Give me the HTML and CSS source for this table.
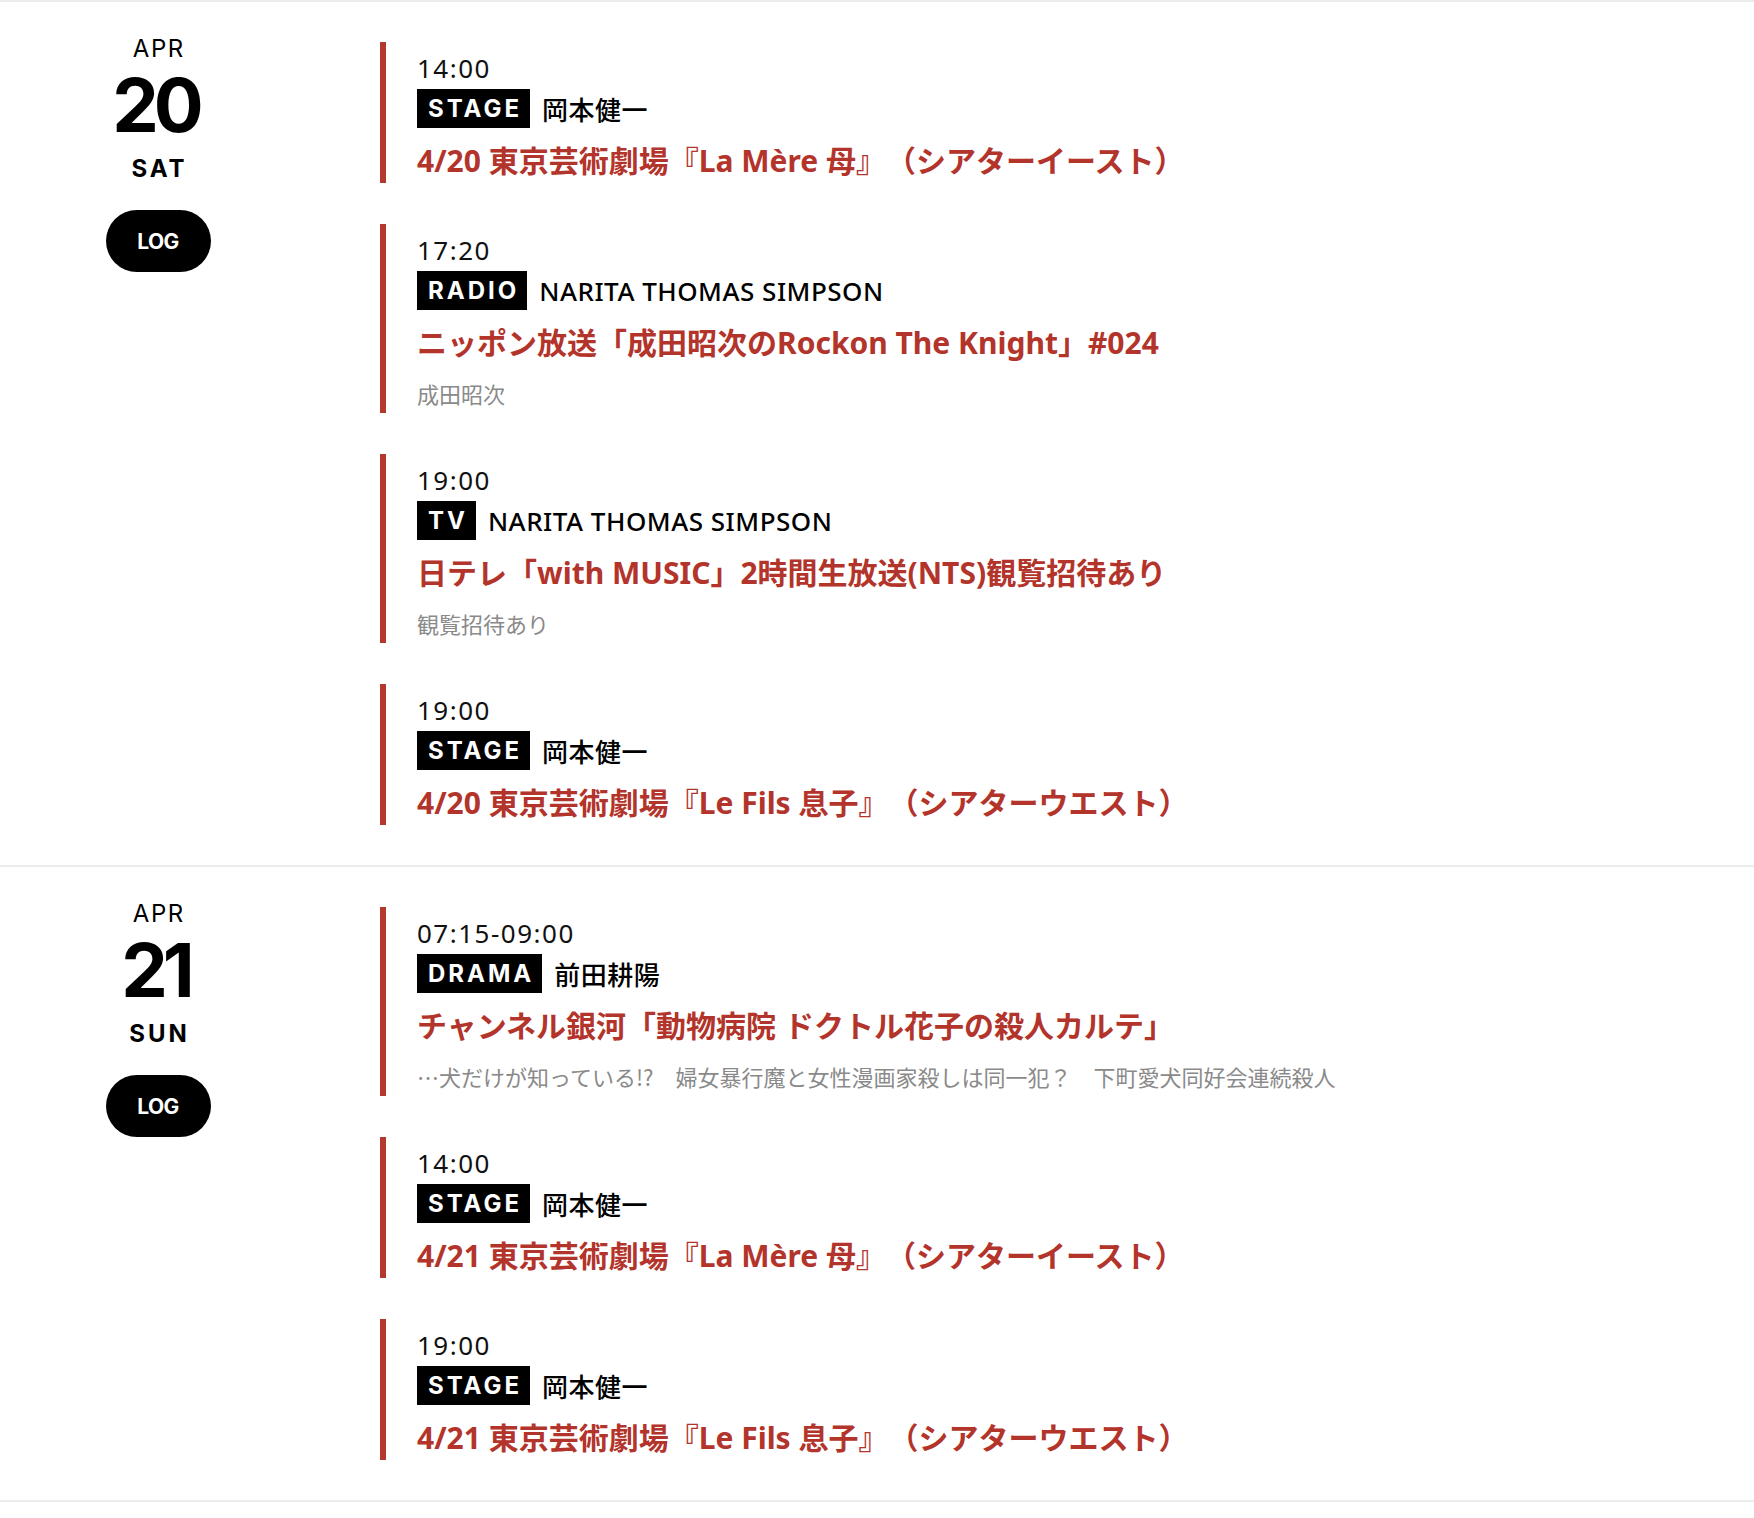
FILE: index.html
```html
<!DOCTYPE html>
<html lang="ja">
<head>
<meta charset="utf-8">
<title>Schedule</title>
<link rel="stylesheet" href="styles.css">
</head>
<body>
<main class="schedule">
  <section class="day">
    <div class="date">
      <div class="month">APR</div>
      <div class="daynum">20</div>
      <div class="weekday">SAT</div>
      <a class="log" href="#">LOG</a>
    </div>
    <div class="events">
      <article class="event">
        <div class="time">14:00</div>
        <div class="meta"><span class="badge">STAGE</span><span class="who">岡本健一</span></div>
        <div class="title">4/20 東京芸術劇場『La Mère 母』（シアターイースト）</div>
      </article>
      <article class="event">
        <div class="time">17:20</div>
        <div class="meta"><span class="badge">RADIO</span><span class="who">NARITA THOMAS SIMPSON</span></div>
        <div class="title">ニッポン放送「成田昭次のRockon The Knight」#024</div>
        <div class="note">成田昭次</div>
      </article>
      <article class="event">
        <div class="time">19:00</div>
        <div class="meta"><span class="badge">TV</span><span class="who">NARITA THOMAS SIMPSON</span></div>
        <div class="title">日テレ「with MUSIC」2時間生放送(NTS)観覧招待あり</div>
        <div class="note">観覧招待あり</div>
      </article>
      <article class="event">
        <div class="time">19:00</div>
        <div class="meta"><span class="badge">STAGE</span><span class="who">岡本健一</span></div>
        <div class="title">4/20 東京芸術劇場『Le Fils 息子』（シアターウエスト）</div>
      </article>
    </div>
  </section>
  <section class="day">
    <div class="date">
      <div class="month">APR</div>
      <div class="daynum">21</div>
      <div class="weekday">SUN</div>
      <a class="log" href="#">LOG</a>
    </div>
    <div class="events">
      <article class="event">
        <div class="time">07:15-09:00</div>
        <div class="meta"><span class="badge">DRAMA</span><span class="who">前田耕陽</span></div>
        <div class="title">チャンネル銀河「動物病院 ドクトル花子の殺人カルテ」</div>
        <div class="note">…犬だけが知っている!?　婦女暴行魔と女性漫画家殺しは同一犯？　下町愛犬同好会連続殺人</div>
      </article>
      <article class="event">
        <div class="time">14:00</div>
        <div class="meta"><span class="badge">STAGE</span><span class="who">岡本健一</span></div>
        <div class="title">4/21 東京芸術劇場『La Mère 母』（シアターイースト）</div>
      </article>
      <article class="event">
        <div class="time">19:00</div>
        <div class="meta"><span class="badge">STAGE</span><span class="who">岡本健一</span></div>
        <div class="title">4/21 東京芸術劇場『Le Fils 息子』（シアターウエスト）</div>
      </article>
    </div>
  </section>
</main>
</body>
</html>
```

FILE: styles.css
```css
html, body {
  margin: 0;
  padding: 0;
  background: #fff;
}

body {
  font-family: "Noto Sans", "Noto Sans CJK JP", sans-serif;
  color: #111;
  text-spacing-trim: space-all;
}

.schedule {
  border-bottom: 2px solid #ececec;
}

.day {
  display: flex;
  align-items: flex-start;
  border-top: 2px solid #ececec;
  padding: 40px 0 40px;
}

.date {
  width: 316px;
  flex: none;
  display: flex;
  flex-direction: column;
  align-items: center;
  font-family: "Inter", "Noto Sans", sans-serif;
  color: #000;
}

.month {
  font-size: 24px;
  font-weight: 400;
  letter-spacing: 1.5px;
  line-height: 30px;
  margin-top: -8px;
  margin-right: -1.5px;
}

.daynum {
  font-size: 74px;
  font-weight: 700;
  letter-spacing: -5px;
  line-height: 60px;
  margin-top: 11px;
  margin-right: 5px;
}

.weekday {
  font-size: 24px;
  font-weight: 700;
  letter-spacing: 3px;
  line-height: 30px;
  margin-top: 19px;
  margin-right: -3px;
}

.log {
  display: flex;
  align-items: center;
  justify-content: center;
  width: 105px;
  height: 62px;
  margin-top: 26px;
  border-radius: 31px;
  background: #000;
  color: #fff;
  text-decoration: none;
  font-size: 21px;
  font-weight: 700;
  letter-spacing: -0.5px;
}

.events {
  margin-left: 64px;
  display: flex;
  flex-direction: column;
  gap: 41px;
}

.event {
  border-left: 6px solid #b3382e;
  padding: 9px 0 1px 31px;
  display: flex;
  flex-direction: column;
}

.time {
  font-size: 26px;
  line-height: 34px;
  font-weight: 400;
  letter-spacing: 1.5px;
  color: #111;
}

.meta {
  display: flex;
  align-items: center;
  margin-top: 4px;
  height: 39px;
}

.badge {
  display: inline-block;
  height: 39px;
  line-height: 39px;
  padding: 0 8px 0 11px;
  background: #000;
  color: #fff;
  font-family: "Inter", sans-serif;
  font-size: 24px;
  font-weight: 700;
  letter-spacing: 3px;
}

.who {
  margin-left: 12px;
  font-size: 26px;
  font-weight: 500;
  letter-spacing: 0.5px;
  color: #000;
}

.title {
  margin-top: 12px;
  padding-bottom: 1px;
  font-size: 30px;
  line-height: 41px;
  font-weight: 700;
  color: #b3342b;
}

.note {
  margin-top: 11px;
  font-family: "Noto Sans CJK JP", sans-serif;
  font-size: 22px;
  line-height: 37px;
  color: #8a8a8a;
}
```
